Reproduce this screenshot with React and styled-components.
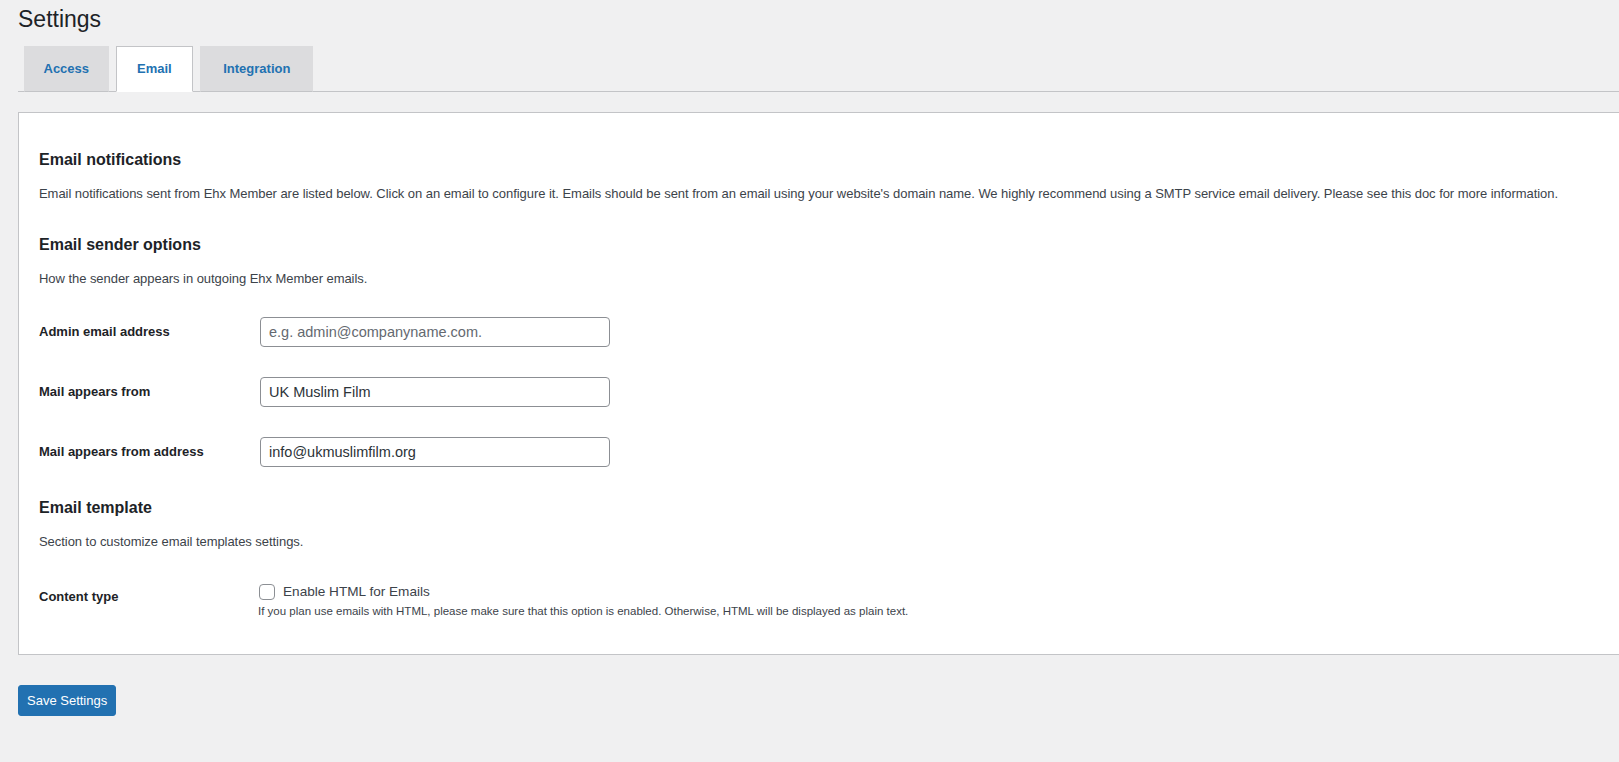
import React from "react";
import styled, { createGlobalStyle } from "styled-components";

const Global = createGlobalStyle`
  html, body { margin: 0; padding: 0; background: #f0f0f1; overflow: hidden; }
  body { font-family: "Liberation Sans", Arial, sans-serif; color: #3c434a; font-size: 13px; }
  * { box-sizing: border-box; }
`;

const Page = styled.div`
  padding: 4px 0 40px 18px;
  width: calc(100% + 40px);
`;

const Title = styled.h1`
  margin: 0;
  font-size: 23px;
  font-weight: 400;
  line-height: 30px;
  color: #1d2327;
`;

const TabBar = styled.nav`
  margin-top: 12px;
  display: flex;
  gap: 7.5px;
  padding-left: 6px;
  border-bottom: 1px solid #c3c4c7;
`;

const Tab = styled.a`
  display: block;
  height: 46px;
  margin-bottom: -1px;
  padding: 0 ${(p) => p.$px}px;
  line-height: 44px;
  font-size: 13px;
  font-weight: 700;
  color: #2271b1;
  text-decoration: none;
  background: ${(p) => (p.$active ? "#fff" : "#dcdcde")};
  border: 1px solid ${(p) => (p.$active ? "#c3c4c7" : "#dcdcde")};
  border-bottom-color: ${(p) => (p.$active ? "#fff" : "#c3c4c7")};
`;

const Panel = styled.div`
  margin-top: 20px;
  background: #fff;
  border: 1px solid #c3c4c7;
  padding: 36px 20px 36px;
`;

const Heading = styled.h2`
  margin: ${(p) => (p.$first ? "0" : "30px")} 0 0;
  font-size: 16px;
  line-height: 22px;
  font-weight: 700;
  color: #1d2327;
`;

const Desc = styled.p`
  margin: 13px 0 0;
  font-size: 13px;
  line-height: 20px;
  letter-spacing: -0.05px;
  color: #3c434a;
`;

const Row = styled.div`
  display: grid;
  grid-template-columns: 221px 1fr;
  align-items: ${(p) => (p.$top ? "start" : "center")};
  margin-top: ${(p) => p.$mt}px;
`;

const Label = styled.label`
  font-size: 13px;
  font-weight: 700;
  color: #1d2327;
  line-height: 20px;
  padding-top: ${(p) => p.$pt || 0}px;
`;

const Input = styled.input`
  width: 350px;
  height: 30px;
  padding: 0 8px;
  border: 1px solid #8c8f94;
  border-radius: 4px;
  font-family: inherit;
  font-size: 14.5px;
  color: #2c3338;
  background: #fff;
  outline: none;
  &::placeholder { color: #646970; }
`;

const CheckLine = styled.label`
  display: flex;
  align-items: center;
  gap: 8px;
  font-size: 13.6px;
  line-height: 20px;
  color: #3c434a;
`;

const Box = styled.span`
  width: 16px;
  height: 16px;
  border: 1px solid #8c8f94;
  border-radius: 4px;
  background: #fff;
  margin-left: -1px;
`;

const Help = styled.p`
  margin: 2px 0 0 -2px;
  font-size: 11.5px;
  line-height: 14px;
  color: #3c434a;
`;

const Button = styled.button`
  margin-top: 30px;
  height: 31px;
  padding: 0 8px;
  background: #2271b1;
  border: 1px solid #2271b1;
  border-radius: 3px;
  color: #fff;
  font-family: inherit;
  font-size: 13px;
`;

export default function App() {
  return (
    <>
      <Global />
      <Page>
        <Title>Settings</Title>
        <TabBar>
          <Tab $px={18.5}>Access</Tab>
          <Tab $px={20} $active>Email</Tab>
          <Tab $px={22}>Integration</Tab>
        </TabBar>
        <Panel>
          <Heading $first>Email notifications</Heading>
          <Desc>
            Email notifications sent from Ehx Member are listed below. Click on an email to configure it. Emails should be sent from an email using your website's domain name. We highly recommend using a SMTP service email delivery. Please see this doc for more information.
          </Desc>
          <Heading>Email sender options</Heading>
          <Desc>How the sender appears in outgoing Ehx Member emails.</Desc>
          <Row $mt={28}>
            <Label>Admin email address</Label>
            <Input placeholder="e.g. admin@companyname.com." />
          </Row>
          <Row $mt={30}>
            <Label>Mail appears from</Label>
            <Input defaultValue="UK Muslim Film" />
          </Row>
          <Row $mt={30}>
            <Label>Mail appears from address</Label>
            <Input defaultValue="info@ukmuslimfilm.org" />
          </Row>
          <Heading>Email template</Heading>
          <Desc>Section to customize email templates settings.</Desc>
          <Row $mt={30} $top>
            <Label $pt={5}>Content type</Label>
            <div>
              <CheckLine>
                <Box />
                Enable HTML for Emails
              </CheckLine>
              <Help>
                If you plan use emails with HTML, please make sure that this option is enabled. Otherwise, HTML will be displayed as plain text.
              </Help>
            </div>
          </Row>
        </Panel>
        <Button>Save Settings</Button>
      </Page>
    </>
  );
}
